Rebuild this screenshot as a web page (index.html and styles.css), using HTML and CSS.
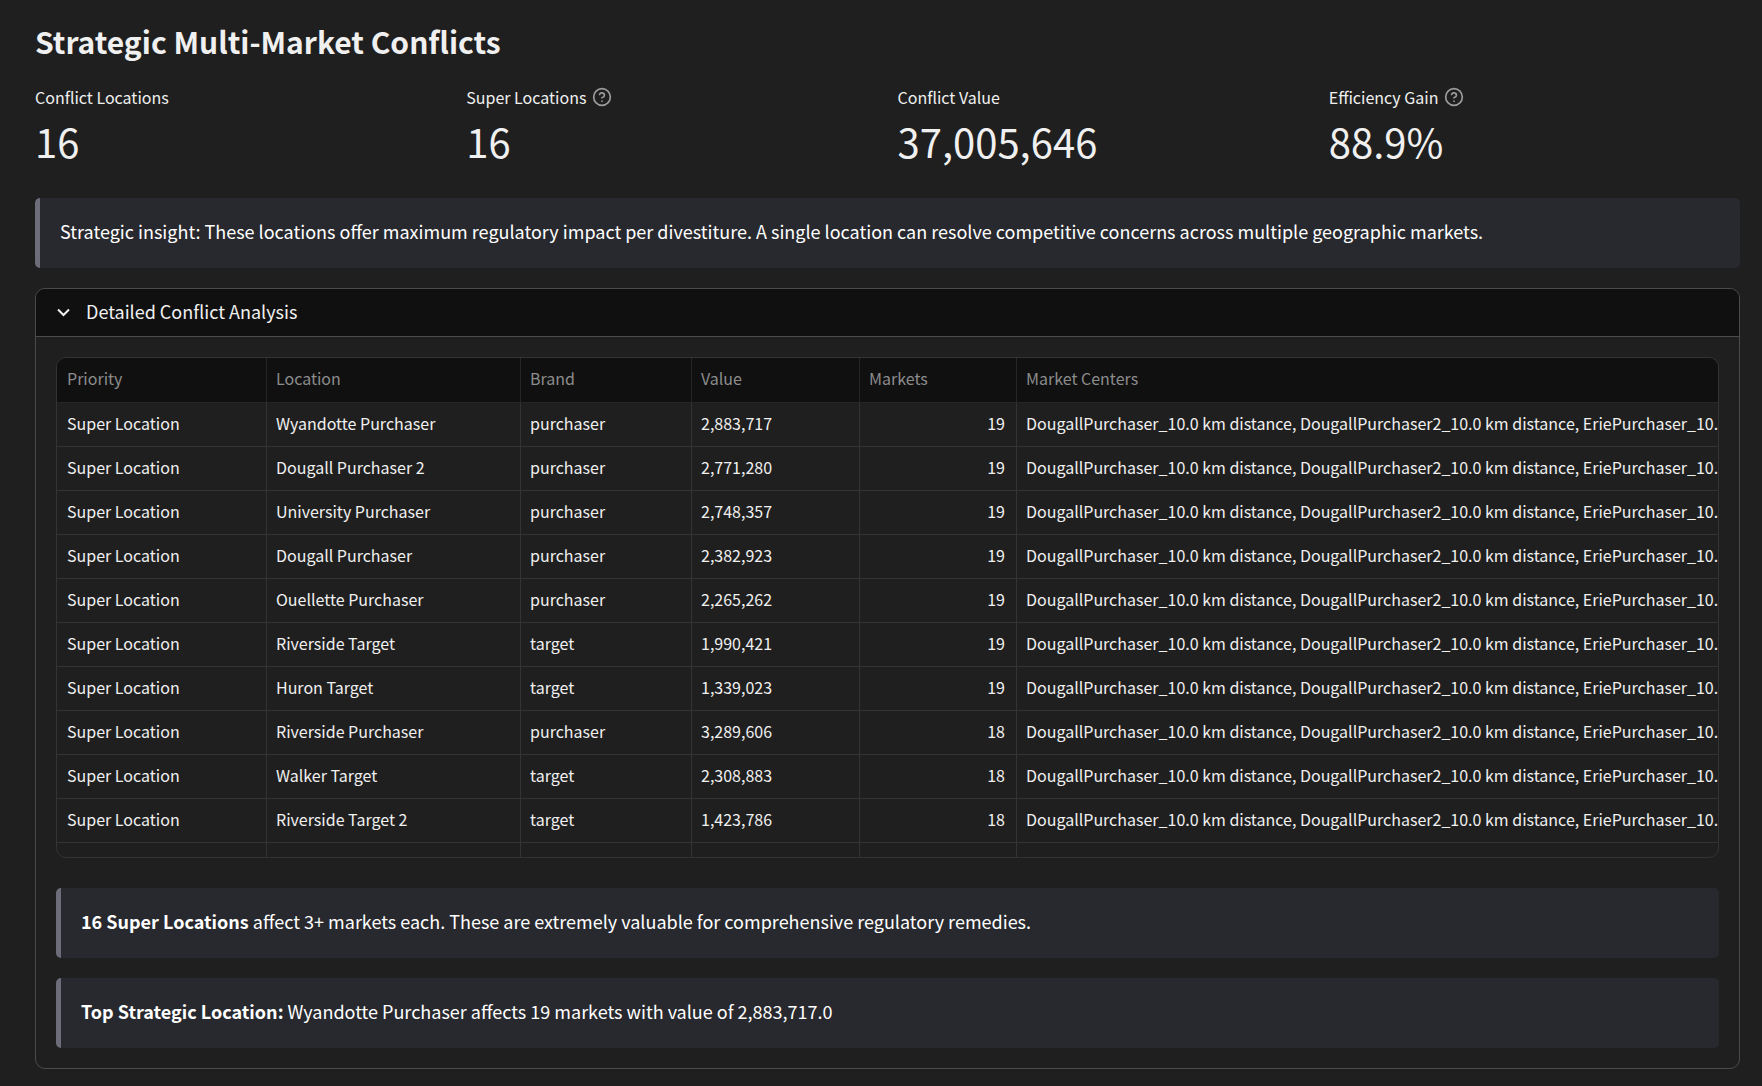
FILE: index.html
```html
<!DOCTYPE html>
<html lang="en">
<head>
<meta charset="utf-8">
<title>Strategic Multi-Market Conflicts</title>
<link rel="stylesheet" href="styles.css">
</head>
<body>
<main class="page">
  <h1 class="title">Strategic Multi-Market Conflicts</h1>
  <section class="metrics">
    <div class="metric">
      <div class="metric-label">Conflict Locations</div>
      <div class="metric-value">16</div>
    </div>
    <div class="metric">
      <div class="metric-label">Super Locations
        <button class="help" type="button" aria-label="Help"><svg viewBox="0 0 24 24"><circle cx="12" cy="12" r="10"/><path d="M9.09 9a3 3 0 0 1 5.83 1c0 2-3 3-3 3M12 17h.01"/></svg></button>
      </div>
      <div class="metric-value">16</div>
    </div>
    <div class="metric">
      <div class="metric-label">Conflict Value</div>
      <div class="metric-value">37,005,646</div>
    </div>
    <div class="metric">
      <div class="metric-label">Efficiency Gain
        <button class="help" type="button" aria-label="Help"><svg viewBox="0 0 24 24"><circle cx="12" cy="12" r="10"/><path d="M9.09 9a3 3 0 0 1 5.83 1c0 2-3 3-3 3M12 17h.01"/></svg></button>
      </div>
      <div class="metric-value">88.9%</div>
    </div>
  </section>
  <p class="callout">Strategic insight: These locations offer maximum regulatory impact per divestiture. A single location can resolve competitive concerns across multiple geographic markets.</p>
  <details class="expander" open>
    <summary class="expander-head">
      <svg class="chevron" viewBox="0 0 13 9"><path d="M1 1.500l5.500 5.500 5.500-5.500"/></svg>
      Detailed Conflict Analysis
    </summary>
    <div class="expander-body">
      <div class="table-wrap">
        <table class="grid">
          <colgroup><col class="c-priority"><col class="c-location"><col class="c-brand"><col class="c-value"><col class="c-markets"><col></colgroup>
          <thead>
            <tr><th>Priority</th><th>Location</th><th>Brand</th><th>Value</th><th>Markets</th><th>Market Centers</th></tr>
          </thead>
          <tbody>
            <tr><td>Super Location</td><td>Wyandotte Purchaser</td><td>purchaser</td><td>2,883,717</td><td class="num">19</td><td>DougallPurchaser_10.0 km distance, DougallPurchaser2_10.0 km distance, EriePurchaser_10.0 km distance</td></tr>
            <tr><td>Super Location</td><td>Dougall Purchaser 2</td><td>purchaser</td><td>2,771,280</td><td class="num">19</td><td>DougallPurchaser_10.0 km distance, DougallPurchaser2_10.0 km distance, EriePurchaser_10.0 km distance</td></tr>
            <tr><td>Super Location</td><td>University Purchaser</td><td>purchaser</td><td>2,748,357</td><td class="num">19</td><td>DougallPurchaser_10.0 km distance, DougallPurchaser2_10.0 km distance, EriePurchaser_10.0 km distance</td></tr>
            <tr><td>Super Location</td><td>Dougall Purchaser</td><td>purchaser</td><td>2,382,923</td><td class="num">19</td><td>DougallPurchaser_10.0 km distance, DougallPurchaser2_10.0 km distance, EriePurchaser_10.0 km distance</td></tr>
            <tr><td>Super Location</td><td>Ouellette Purchaser</td><td>purchaser</td><td>2,265,262</td><td class="num">19</td><td>DougallPurchaser_10.0 km distance, DougallPurchaser2_10.0 km distance, EriePurchaser_10.0 km distance</td></tr>
            <tr><td>Super Location</td><td>Riverside Target</td><td>target</td><td>1,990,421</td><td class="num">19</td><td>DougallPurchaser_10.0 km distance, DougallPurchaser2_10.0 km distance, EriePurchaser_10.0 km distance</td></tr>
            <tr><td>Super Location</td><td>Huron Target</td><td>target</td><td>1,339,023</td><td class="num">19</td><td>DougallPurchaser_10.0 km distance, DougallPurchaser2_10.0 km distance, EriePurchaser_10.0 km distance</td></tr>
            <tr><td>Super Location</td><td>Riverside Purchaser</td><td>purchaser</td><td>3,289,606</td><td class="num">18</td><td>DougallPurchaser_10.0 km distance, DougallPurchaser2_10.0 km distance, EriePurchaser_10.0 km distance</td></tr>
            <tr><td>Super Location</td><td>Walker Target</td><td>target</td><td>2,308,883</td><td class="num">18</td><td>DougallPurchaser_10.0 km distance, DougallPurchaser2_10.0 km distance, EriePurchaser_10.0 km distance</td></tr>
            <tr><td>Super Location</td><td>Riverside Target 2</td><td>target</td><td>1,423,786</td><td class="num">18</td><td>DougallPurchaser_10.0 km distance, DougallPurchaser2_10.0 km distance, EriePurchaser_10.0 km distance</td></tr>
            <tr><td>Super Location</td><td>University Purchaser 2</td><td>purchaser</td><td>1,402,115</td><td class="num">18</td><td>DougallPurchaser_10.0 km distance, DougallPurchaser2_10.0 km distance, EriePurchaser_10.0 km distance</td></tr>
          </tbody>
        </table>
      </div>
      <p class="callout"><strong>16 Super Locations</strong> affect 3+ markets each. These are extremely valuable for comprehensive regulatory remedies.</p>
      <p class="callout"><strong>Top Strategic Location:</strong> Wyandotte Purchaser affects 19 markets with value of 2,883,717.0</p>
    </div>
  </details>
</main>
</body>
</html>
```
FILE: styles.css
```css
* { box-sizing: border-box; }

body {
  margin: 0;
  background: #1f1f1f;
  color: #f0f0f0;
  font-family: "Noto Sans CJK SC", "Noto Sans", sans-serif;
  font-size: 18px;
  line-height: 30px;
}

.page { padding: 20px 22px 18px 35px; }

.title {
  margin: 0;
  font-size: 30px;
  line-height: 42px;
  font-weight: 700;
}

.metrics {
  display: grid;
  grid-template-columns: repeat(4, 1fr);
  gap: 20px;
  padding: 22px 0 26px;
}

.metric-label {
  display: flex;
  align-items: center;
  gap: 6px;
  font-size: 16px;
  line-height: 26px;
}

.metric-value {
  font-size: 40px;
  line-height: 62px;
}

.help {
  display: flex;
  padding: 0;
  border: 0;
  background: none;
  color: #9c9c9c;
}

.help svg {
  width: 20px;
  height: 20px;
  fill: none;
  stroke: currentColor;
  stroke-width: 2;
  stroke-linecap: round;
  stroke-linejoin: round;
}

.callout {
  margin: 0;
  padding: 18px 20px 22px;
  border-left: 5px solid #6c6d78;
  border-radius: 5px;
  background: #28292e;
  color: #fff;
}

.expander {
  margin-top: 20px;
  border: 1px solid #4b4b4b;
  border-radius: 10px;
  overflow: hidden;
}

.expander-head {
  display: flex;
  align-items: center;
  gap: 16px;
  padding: 7px 21px 10px;
  background: #101010;
  border-bottom: 1px solid #4b4b4b;
  list-style: none;
  cursor: pointer;
}

.chevron {
  width: 13px;
  height: 9px;
  margin-top: 2px;
  fill: none;
  stroke: currentColor;
  stroke-width: 2;
}

.expander-body {
  display: flex;
  flex-direction: column;
  gap: 20px;
  padding: 20px;
}

.table-wrap {
  height: 501px;
  margin-bottom: 10px;
  border: 1px solid #333;
  border-radius: 10px;
  overflow: hidden;
}

.grid {
  width: 100%;
  table-layout: fixed;
  border-collapse: separate;
  border-spacing: 0;
  font-size: 16px;
  line-height: 24px;
}

.c-priority { width: 210px; }
.c-location { width: 254px; }
.c-brand { width: 171px; }
.c-value { width: 168px; }
.c-markets { width: 157px; }

.grid th,
.grid td {
  height: 44px;
  padding: 0 11px 4px 9px;
  border-right: 1px solid #333;
  border-bottom: 1px solid #333;
  text-align: left;
  font-weight: 400;
  white-space: nowrap;
  overflow: hidden;
}

.grid th {
  height: 45px;
  background: #101010;
  border-color: #262626;
  color: #8c8c8c;
}

.grid th:first-child,
.grid td:first-child { padding-left: 10px; }

.grid th:last-child,
.grid td:last-child {
  padding-right: 0;
  border-right: 0;
}

.grid .num { text-align: right; }
```
